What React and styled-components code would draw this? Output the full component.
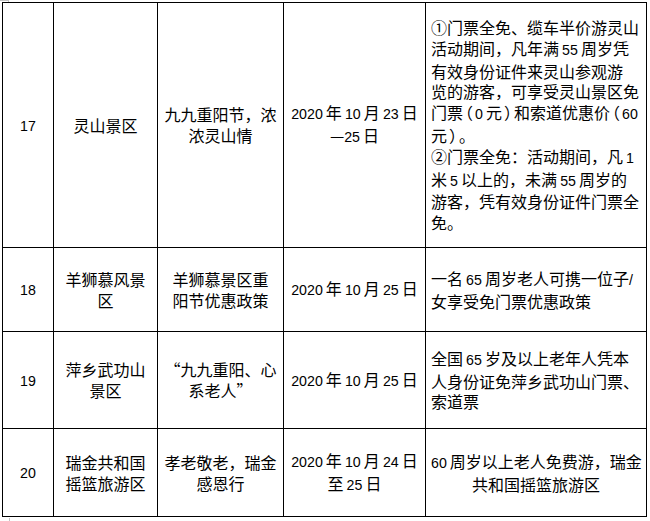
import React from "react";
import styled, { createGlobalStyle } from "styled-components";

const Global = createGlobalStyle`
  html, body { margin: 0; padding: 0; background: #fff; }
  body { font-family: "Noto Sans CJK SC", "Liberation Sans", sans-serif; color: #000; }
`;

const Page = styled.div`
  position: relative;
  width: 650px;
  height: 521px;
  padding: 2px 0 0 2px;
  box-sizing: border-box;
  overflow: hidden;
`;

const Table = styled.table`
  border-collapse: collapse;
  table-layout: fixed;
  width: 645px;
`;

const Row = styled.tr`
  height: ${(p) => p.$h}px;
`;

const Cell = styled.td`
  border: 1px solid #000;
  padding: 0 5px;
  vertical-align: middle;
  text-align: ${(p) => (p.$left ? "left" : "center")};
  font-size: 16px;
  line-height: 20.8px;
  white-space: nowrap;
  word-spacing: -0.5px;
`;

const Num = styled.span`
  font-family: "Liberation Sans", sans-serif;
  font-size: 14.2px;
  word-spacing: 0;
`;

const Paren = styled.span`
  font-feature-settings: "halt" 1;
  margin: 0 2px;
`;

const Mark = styled.div`
  position: absolute;
  background: #c4c4c4;
  left: ${(p) => p.$x}px;
  top: ${(p) => p.$y}px;
  width: ${(p) => p.$w}px;
  height: ${(p) => p.$hh}px;
`;

function T({ lines }) {
  return lines.map((line, i) => (
    <React.Fragment key={i}>
      {i > 0 && <br />}
      {line.split(/([0-9A-Za-z/]+|[（）])/).map((part, j) => {
        if (/^[0-9A-Za-z/]+$/.test(part)) return <Num key={j}>{part}</Num>;
        if (part === "（" || part === "）") return <Paren key={j}>{part}</Paren>;
        return part;
      })}
    </React.Fragment>
  ));
}

const rows = [
  {
    h: 245,
    no: "17",
    name: ["灵山景区"],
    act: ["九九重阳节，浓", "浓灵山情"],
    date: ["2020 年 10 月 23 日", "—25 日"],
    desc: [
      "①门票全免、缆车半价游灵山",
      "活动期间，凡年满 55 周岁凭",
      "有效身份证件来灵山参观游",
      "览的游客，可享受灵山景区免",
      "门票（0 元）和索道优惠价（60",
      "元）。",
      "②门票全免：活动期间，凡 1",
      "米 5 以上的，未满 55 周岁的",
      "游客，凭有效身份证件门票全",
      "免。",
    ],
    left: true,
  },
  {
    h: 84,
    no: "18",
    name: ["羊狮慕风景", "区"],
    act: ["羊狮慕景区重", "阳节优惠政策"],
    date: ["2020 年 10 月 25 日"],
    desc: ["一名 65 周岁老人可携一位子/", "女享受免门票优惠政策"],
    left: true,
  },
  {
    h: 97,
    no: "19",
    name: ["萍乡武功山", "景区"],
    act: ["“九九重阳、心", "系老人”"],
    date: ["2020 年 10 月 25 日"],
    desc: ["全国 65 岁及以上老年人凭本", "人身份证免萍乡武功山门票、", "索道票"],
    left: true,
  },
  {
    h: 88,
    no: "20",
    name: ["瑞金共和国", "摇篮旅游区"],
    act: ["孝老敬老，瑞金", "感恩行"],
    date: ["2020 年 10 月 24 日", "至 25 日"],
    desc: ["60 周岁以上老人免费游，瑞金", "共和国摇篮旅游区"],
    left: false,
  },
];

export default function App() {
  return (
    <>
      <Global />
      <Page>
        <Mark $x={0} $y={0} $w={9} $hh={1} />
        <Mark $x={8} $y={0} $w={1} $hh={2} />
        <Mark $x={9} $y={518} $w={1} $hh={3} />
        <Table>
          <colgroup>
            <col style={{ width: 51 }} />
            <col style={{ width: 104 }} />
            <col style={{ width: 126 }} />
            <col style={{ width: 142 }} />
            <col style={{ width: 221 }} />
          </colgroup>
          <tbody>
            {rows.map((r) => (
              <Row key={r.no} $h={r.h}>
                <Cell><Num>{r.no}</Num></Cell>
                <Cell><T lines={r.name} /></Cell>
                <Cell><T lines={r.act} /></Cell>
                <Cell><T lines={r.date} /></Cell>
                <Cell $left={r.left}><T lines={r.desc} /></Cell>
              </Row>
            ))}
          </tbody>
        </Table>
      </Page>
    </>
  );
}
